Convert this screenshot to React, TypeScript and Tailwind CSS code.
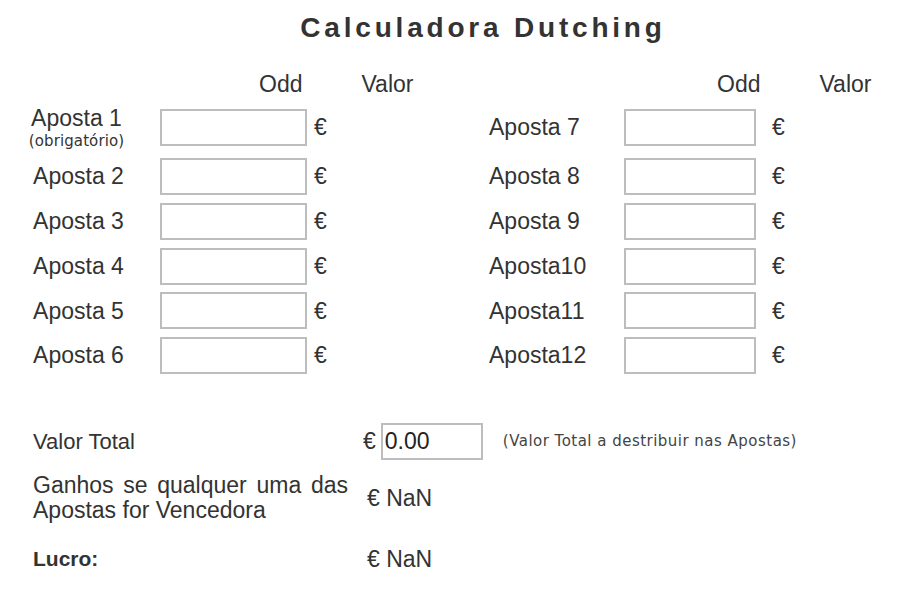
const sans = { fontFamily: '"Liberation Sans", Arial, sans-serif' };
const small = { fontFamily: '"DejaVu Sans", Verdana, sans-serif' };

const leftRows = [2, 3, 4, 5, 6];
const rightRows = ["Aposta 8", "Aposta 9", "Aposta10", "Aposta11", "Aposta12"];

function OddInput({ wide }: { wide?: boolean }) {
  return (
    <input
      type="text"
      className={
        wide
          ? "h-[37px] w-[147px] border-2 border-[#bdbdbd] bg-white outline-none"
          : "h-[37px] w-[132px] border-2 border-[#bdbdbd] bg-white outline-none"
      }
    />
  );
}

function LeftBlock() {
  return (
    <div className="flex w-[469px] flex-col">
      <div className="flex h-[26px] pl-[259px] leading-[26px]">
        <span>Odd</span>
        <span className="ml-[59px]">Valor</span>
      </div>
      <div className="mt-[7.5px] flex flex-col gap-[7.7px]">
        <div className="flex h-[46px] items-center">
          <div className="ml-[18px] flex w-[117px] flex-col items-center">
            <span className="leading-[27px]">Aposta 1</span>
            <span className="text-[15px] leading-[19px] tracking-[0.1px]" style={small}>
              (obrigatório)
            </span>
          </div>
          <div className="ml-[25px]">
            <OddInput wide />
          </div>
          <span className="ml-[7px]">€</span>
        </div>
        {leftRows.map((n) => (
          <div key={n} className="flex h-[37px] items-center">
            <div className="ml-[20px] w-[117px] text-center">Aposta {n}</div>
            <div className="ml-[23px]">
              <OddInput wide />
            </div>
            <span className="ml-[7px]">€</span>
          </div>
        ))}
      </div>
    </div>
  );
}

function RightBlock() {
  return (
    <div className="flex flex-col pl-[20px]">
      <div className="flex h-[26px] pl-[228px] leading-[26px]">
        <span>Odd</span>
        <span className="ml-[59px]">Valor</span>
      </div>
      <div className="mt-[7.5px] flex flex-col gap-[7.7px]">
        <div className="flex h-[46px] items-center">
          <div className="w-[135px]">Aposta 7</div>
          <OddInput />
          <span className="ml-[16px]">€</span>
        </div>
        {rightRows.map((label) => (
          <div key={label} className="flex h-[37px] items-center">
            <div className="w-[135px]">{label}</div>
            <OddInput />
            <span className="ml-[16px]">€</span>
          </div>
        ))}
      </div>
    </div>
  );
}

export default function App() {
  return (
    <div className="min-h-[591px] w-[918px] bg-white text-[23px] text-[#333]" style={sans}>
      <h1 className="mt-[12px] pl-[48px] text-center text-[28px] font-bold leading-[32px] tracking-[3.8px] text-[#333]">
        Calculadora Dutching
      </h1>

      <div className="mt-[27px] flex">
        <LeftBlock />
        <RightBlock />
      </div>

      <div className="mt-[49px] flex h-[37px] items-center pl-[33px]">
        <div className="w-[330px] text-[22px]">Valor Total</div>
        <span>€</span>
        <input
          type="text"
          defaultValue="0.00"
          className="ml-[5px] h-[37px] w-[102px] border-2 border-[#bdbdbd] bg-white px-[2px] text-[23px] text-[#222] outline-none"
          style={sans}
        />
        <span className="ml-[20px] text-[15px] tracking-[0.48px] text-[#444]" style={small}>
          (Valor Total a destribuir nas Apostas)
        </span>
      </div>

      <div className="mt-[13px] flex items-center pl-[33px]">
        <div className="w-[315px] text-justify text-[23px] leading-[25px] [text-align-last:left]">
          Ganhos se qualquer uma das Apostas for Vencedora
        </div>
        <span className="ml-[19px]">€ NaN</span>
      </div>

      <div className="mt-[23px] flex items-center pl-[33px] leading-[26px]">
        <div className="w-[334px] text-[21px] font-bold">Lucro:</div>
        <span>€ NaN</span>
      </div>
    </div>
  );
}
